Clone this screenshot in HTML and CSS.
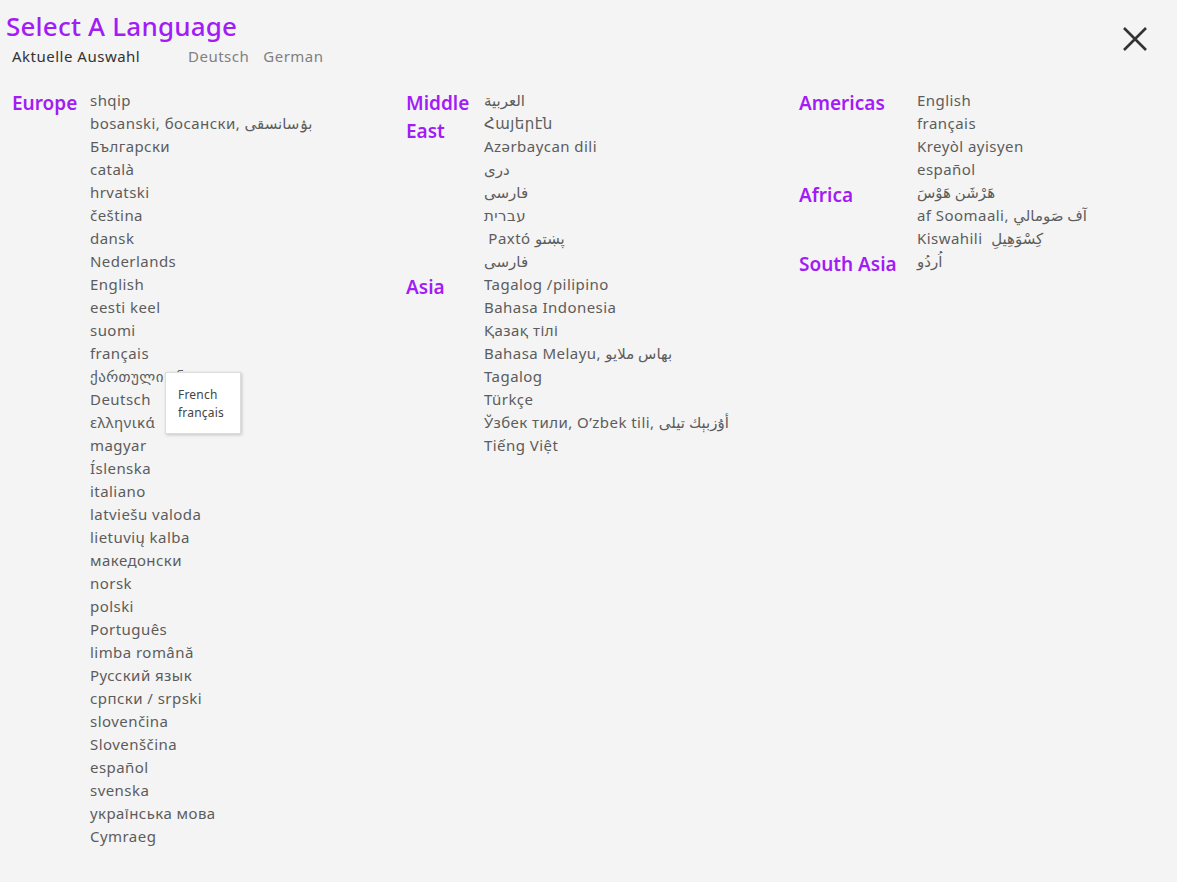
FILE: index.html
```html
<!DOCTYPE html>
<html>
<head>
    <meta charset='utf-8'>
    <title>Select A Language</title>
    <link rel="stylesheet" href="styles.css">
</head>
<body>
    <div class="div-head">
        <h1 class="h-title">Select A Language</h1>
        <div class="div-current">
            <span class="lbl-current">Aktuelle Auswahl</span>
            <span class="lbl-sel">Deutsch</span>
            <span class="lbl-sel">German</span>
        </div>
        <button class="btn-close" aria-label="close">
            <svg width="26" height="26" viewBox="0 0 26 26"><path d="M2 2 L24 24 M24 2 L2 24" stroke="#333" stroke-width="2.6" fill="none"/></svg>
        </button>
    </div>

    <div class="div-columns">

        <div class="div-col col-a">
            <div class="div-region">
                <div class="lbl-region">Europe</div>
                <ul class="ul-lang">
                    <li>shqip</li>
                    <li>bosanski, босански, بۉسانسقى</li>
                    <li>Български</li>
                    <li>català</li>
                    <li>hrvatski</li>
                    <li>čeština</li>
                    <li>dansk</li>
                    <li>Nederlands</li>
                    <li>English</li>
                    <li>eesti keel</li>
                    <li>suomi</li>
                    <li>français</li>
                    <li class="li-tip">ქართული ენა
                        <div class="div-tip">French<br>français</div>
                    </li>
                    <li>Deutsch</li>
                    <li>ελληνικά</li>
                    <li>magyar</li>
                    <li>Íslenska</li>
                    <li>italiano</li>
                    <li>latviešu valoda</li>
                    <li>lietuvių kalba</li>
                    <li>македонски</li>
                    <li>norsk</li>
                    <li>polski</li>
                    <li>Português</li>
                    <li>limba română</li>
                    <li>Русский язык</li>
                    <li>српски / srpski</li>
                    <li>slovenčina</li>
                    <li>Slovenščina</li>
                    <li>español</li>
                    <li>svenska</li>
                    <li>українська мова</li>
                    <li>Cymraeg</li>
                </ul>
            </div>
        </div>

        <div class="div-col col-b">
            <div class="div-region">
                <div class="lbl-region">Middle East</div>
                <ul class="ul-lang">
                    <li>العربية</li>
                    <li>Հայերէն</li>
                    <li>Azərbaycan dili</li>
                    <li>دری</li>
                    <li>فارسی</li>
                    <li>עברית</li>
                    <li>&nbsp;Paxtó پښتو</li>
                    <li>فارسی</li>
                </ul>
            </div>
            <div class="div-region">
                <div class="lbl-region">Asia</div>
                <ul class="ul-lang">
                    <li>Tagalog /pilipino</li>
                    <li>Bahasa Indonesia</li>
                    <li>Қазақ тілі</li>
                    <li>Bahasa Melayu, بهاس ملايو</li>
                    <li>Tagalog</li>
                    <li>Türkçe</li>
                    <li>Ўзбек тили, O’zbek tili, أۇزبېك تیلی</li>
                    <li>Tiếng Việt</li>
                </ul>
            </div>
        </div>

        <div class="div-col col-c">
            <div class="div-region">
                <div class="lbl-region">Americas</div>
                <ul class="ul-lang">
                    <li>English</li>
                    <li>français</li>
                    <li>Kreyòl ayisyen</li>
                    <li>español</li>
                </ul>
            </div>
            <div class="div-region">
                <div class="lbl-region">Africa</div>
                <ul class="ul-lang">
                    <li>هَرْشَن هَوْسَ</li>
                    <li>af Soomaali, آف صَومالي</li>
                    <li>Kiswahili &nbsp;كِسْوَهِيلِ</li>
                </ul>
            </div>
            <div class="div-region">
                <div class="lbl-region">South Asia</div>
                <ul class="ul-lang">
                    <li>اُردُو</li>
                </ul>
            </div>
        </div>

    </div>
</body>
</html>
```

FILE: styles.css
```css
/* reset */
body {
    margin: 0;
    padding: 0;
    background-color: #f4f4f4;
    color: #5c5c5c;
    font-family: "Noto Sans", "DejaVu Sans", sans-serif;
}

ul {
    margin: 0;
    padding: 0;
    list-style: none;
}

/* head */
.div-head {
    position: relative;
    padding: 8px 0 0 6px;
}

.h-title {
    margin: 0;
    color: #a21cf5;
    font-size: 26px;
    font-weight: 500;
    line-height: 36px;
    letter-spacing: 0.2px;
}

.div-current {
    display: flex;
    padding-left: 6px;
    font-size: 15px;
    line-height: 24px;
    letter-spacing: 0.5px;
}

.lbl-current {
    color: #333;
    width: 176px;
}

.lbl-sel {
    color: #808080;
    margin-right: 14px;
}

.btn-close {
    position: absolute;
    top: 26px;
    right: 29px;
    border: none;
    background: none;
    padding: 0;
    cursor: pointer;
}

/* columns */
.div-columns {
    display: flex;
    padding: 21px 0 0 12px;
}

.div-col {
    flex: none;
    width: 394px;
}

.col-b {
    width: 393px;
}

.div-region {
    display: flex;
    align-items: flex-start;
}

.lbl-region {
    flex: none;
    width: 78px;
    color: #a21cf5;
    font-size: 19px;
    font-weight: 600;
    line-height: 28px;
}

.col-c .lbl-region {
    width: 118px;
}

.ul-lang {
    font-size: 15px;
    line-height: 23px;
    letter-spacing: 0.45px;
}

.li-tip {
    position: relative;
}

.div-tip {
    position: absolute;
    left: 75px;
    top: 7px;
    width: 62px;
    padding: 13px 0 11px 12px;
    background-color: white;
    border: 1px solid #ddd;
    box-shadow: 1px 1px 3px rgba(0, 0, 0, 0.2);
    color: #444;
    font-size: 12px;
    line-height: 18px;
    letter-spacing: 0.2px;
}
```
